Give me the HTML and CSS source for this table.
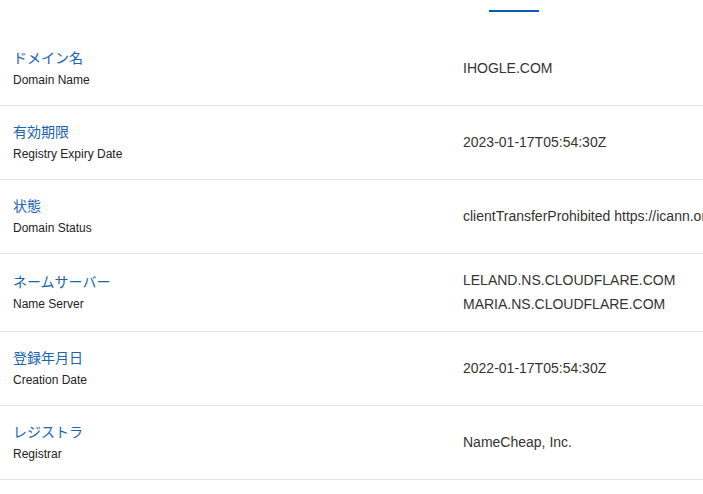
FILE: index.html
```html
<!DOCTYPE html>
<html lang="ja">
<head>
  <meta charset="UTF-8">
  <title>WHOIS</title>
  <link rel="stylesheet" href="styles.css">
</head>
<body>
  <div class="tabs">
    <span class="tab-active"></span>
  </div>

  <div class="whois">
    <div class="row">
      <div class="label"><span class="ja">ドメイン名</span><span class="en">Domain Name</span></div>
      <div class="value">IHOGLE.COM</div>
    </div>
    <div class="row">
      <div class="label"><span class="ja">有効期限</span><span class="en">Registry Expiry Date</span></div>
      <div class="value">2023-01-17T05:54:30Z</div>
    </div>
    <div class="row">
      <div class="label"><span class="ja">状態</span><span class="en">Domain Status</span></div>
      <div class="value">clientTransferProhibited https://icann.org/epp#clientTransferProhibited</div>
    </div>
    <div class="row">
      <div class="label"><span class="ja">ネームサーバー</span><span class="en">Name Server</span></div>
      <div class="value">LELAND.NS.CLOUDFLARE.COM<br>MARIA.NS.CLOUDFLARE.COM</div>
    </div>
    <div class="row">
      <div class="label"><span class="ja">登録年月日</span><span class="en">Creation Date</span></div>
      <div class="value">2022-01-17T05:54:30Z</div>
    </div>
    <div class="row">
      <div class="label"><span class="ja">レジストラ</span><span class="en">Registrar</span></div>
      <div class="value">NameCheap, Inc.</div>
    </div>
  </div>
</body>
</html>
```

FILE: styles.css
```css
html, body { margin: 0; padding: 0; background: #fff; overflow: hidden; }
body { font-family: "Liberation Sans", Arial, "Noto Sans CJK JP", sans-serif; color: #333; }

.tabs { height: 32px; }
.tab-active {
  display: block;
  margin-left: 489px;
  padding-top: 10px;
  width: 50px;
  height: 2px;
  background: #0a5bb5;
  background-clip: content-box;
}

.whois { width: 703px; overflow: hidden; }
.row {
  display: grid;
  grid-template-columns: 450px 1fr;
  align-items: center;
  min-height: 74px;
  box-sizing: border-box;
  padding: 14px 0 15px 13px;
  border-bottom: 1px solid #e3e3e3;
}
.label { display: flex; flex-direction: column; }
.label .ja {
  font-family: "Noto Sans CJK JP", sans-serif;
  font-size: 14px;
  line-height: 20px;
  color: #1a63b0;
  margin-bottom: 4px;
}
.label .en {
  font-size: 12px;
  line-height: 18px;
  color: #222;
}
.value {
  font-size: 14px;
  line-height: 24px;
  color: #333;
  white-space: nowrap;
}
```
